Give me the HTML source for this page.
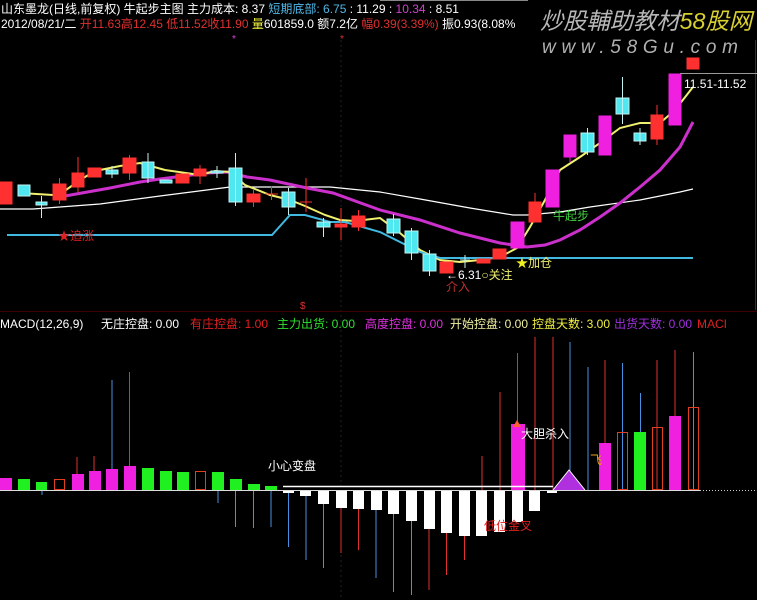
<!DOCTYPE html>
<html><head><meta charset="utf-8"><style>
html,body{margin:0;padding:0;background:#000;}
svg{display:block;}
text{font-family:"Liberation Sans","Noto Sans CJK SC",sans-serif;font-size:12px;}
</style></head><body>
<svg width="757" height="600" viewBox="0 0 757 600" xmlns="http://www.w3.org/2000/svg">
<rect width="757" height="600" fill="#000"/>
<!-- watermark -->
<text x="540" y="29" style="font-size:23px;font-style:italic" fill="#b8b8b8" textLength="212" lengthAdjust="spacingAndGlyphs">炒股輔助教材<tspan fill="#d8d030">58股网</tspan></text>
<text x="542" y="53" style="font-size:19px;font-style:italic" fill="#b0b0b0" textLength="196" lengthAdjust="spacing">www.58Gu.com</text>
<line x1="380" y1="0.5" x2="528" y2="0.5" stroke="#888"/>
<!-- header -->
<text x="1" y="13" fill="#fff">山东墨龙(日线,前复权) 牛起步主图  主力成本: 8.37 <tspan fill="#4fb8e8">短期底部: 6.75</tspan> : 11.29 : <tspan fill="#d040d0">10.34</tspan> : 8.51</text>
<text x="1" y="28" fill="#fff">2012/08/21/二 <tspan fill="#e03030">开11.63高12.45 低11.52收11.90</tspan> <tspan fill="#f0f040">量</tspan>601859.0 额7.2亿 <tspan fill="#e03030">幅0.39(3.39%)</tspan> 振0.93(8.08%</text>
<text x="232" y="42" fill="#e040e0" style="font-size:10px">*</text>
<text x="340" y="42" fill="#e03030" style="font-size:10px">*</text>
<!-- vertical divider -->
<line x1="341" y1="40" x2="341" y2="600" stroke="#222" stroke-dasharray="2,3"/>
<line x1="755.5" y1="40" x2="755.5" y2="310" stroke="#a00000"/>
<!-- separator -->
<line x1="0" y1="311.5" x2="757" y2="311.5" stroke="#400000"/>
<text x="300" y="309" fill="#e03030" style="font-size:10px">$</text>

<!-- MA lines -->
<polyline fill="none" stroke="#fff" stroke-width="1.2" points="0,209 33,209 100,204 160,196 230,187 330,187 380,192 420,199 470,208 513,215 527,215 560,212 590,207 640,200 680,192 693,189"/>
<polyline fill="none" stroke="#cc30cc" stroke-width="3" points="65,196 110,188 140,182 160,179 207,173 227,172 247,177 270,180 307,188 333,193 380,210 420,220 460,233 500,243 527,247 545,245 560,240 580,230 600,217 620,203 640,187 660,170 680,147 693,122"/>
<polyline fill="none" stroke="#f0f070" stroke-width="2" points="20,193 53,195 66,190 80,180 95,171 120,166 140,163 165,170 200,175 215,171 230,172 245,185 270,195 290,200 305,206 325,215 340,220 355,221 380,218 400,233 420,250 440,260 460,262 480,260 500,257 517,248 530,227 545,200 560,170 580,157 600,143 620,128 640,123 660,123 675,110 693,87"/>
<!-- cyan support -->
<polyline fill="none" stroke="#40b8e0" stroke-width="2" points="7,235 272,235 290,215 305,215 330,222 345,222 380,232 420,252 440,258 693,258"/>

<!-- candles: red -->
<g fill="#ff3030" stroke="#ff3030">
<rect x="0" y="182" width="12" height="22"/>
<rect x="53" y="184" width="13" height="16"/><line x1="59.5" y1="178" x2="59.5" y2="204"/>
<rect x="72" y="173" width="12" height="14"/><line x1="78" y1="157" x2="78" y2="192"/>
<rect x="88" y="168" width="13" height="9"/>
<rect x="123" y="158" width="13" height="15"/><line x1="129.5" y1="155" x2="129.5" y2="180"/>
<rect x="176" y="174" width="13" height="9"/>
<rect x="194" y="169" width="12" height="7"/><line x1="200" y1="165" x2="200" y2="184"/>
<rect x="247" y="194" width="13" height="8"/><line x1="253.5" y1="190" x2="253.5" y2="207"/>
<line x1="265" y1="194" x2="278" y2="194"/><line x1="271.5" y1="186" x2="271.5" y2="200"/>
<line x1="300" y1="202" x2="312" y2="202"/><line x1="306" y1="178" x2="306" y2="212"/>
<rect x="335" y="224" width="12" height="3"/><line x1="341" y1="208" x2="341" y2="240"/>
<rect x="352" y="216" width="13" height="11"/><line x1="358.5" y1="210" x2="358.5" y2="231"/>
<rect x="440" y="262" width="13" height="11"/>
<rect x="477" y="259" width="13" height="4"/>
<rect x="493" y="249" width="13" height="10"/>
<rect x="529" y="202" width="12" height="20"/><line x1="535" y1="193" x2="535" y2="222"/>
<rect x="651" y="115" width="12" height="24"/><line x1="657" y1="105" x2="657" y2="145"/>
<rect x="687" y="58" width="12" height="11"/>
</g>
<!-- candles: cyan -->
<g fill="#50e8f0" stroke="#c0f0f0">
<rect x="18" y="185" width="12" height="11"/>
<rect x="36" y="202" width="11" height="3"/><line x1="41.5" y1="196" x2="41.5" y2="218"/>
<rect x="106" y="170" width="12" height="4"/><line x1="112" y1="166" x2="112" y2="178"/>
<rect x="142" y="162" width="12" height="16"/><line x1="148" y1="153" x2="148" y2="183"/>
<rect x="160" y="180" width="12" height="3"/>
<rect x="211" y="171" width="12" height="2"/><line x1="217" y1="166" x2="217" y2="178"/>
<rect x="229" y="168" width="13" height="34"/><line x1="235.5" y1="153" x2="235.5" y2="206"/>
<rect x="282" y="192" width="13" height="15"/><line x1="288.5" y1="188" x2="288.5" y2="215"/>
<rect x="317" y="222" width="13" height="5"/><line x1="323.5" y1="218" x2="323.5" y2="237"/>
<rect x="387" y="219" width="13" height="14"/><line x1="393.5" y1="214" x2="393.5" y2="236"/>
<rect x="405" y="231" width="13" height="22"/><line x1="411.5" y1="228" x2="411.5" y2="260"/>
<rect x="423" y="254" width="13" height="17"/><line x1="429.5" y1="250" x2="429.5" y2="276"/>
<line x1="460" y1="260" x2="470" y2="260"/><line x1="465" y1="255" x2="465" y2="268"/>
<rect x="581" y="133" width="13" height="19"/><line x1="587.5" y1="128" x2="587.5" y2="155"/>
<rect x="616" y="98" width="13" height="16"/><line x1="622.5" y1="77" x2="622.5" y2="124"/>
<rect x="634" y="133" width="12" height="8"/><line x1="640" y1="128" x2="640" y2="145"/>
</g>
<!-- candles: magenta -->
<g fill="#f020e0" stroke="#f020e0">
<rect x="511" y="222" width="13" height="26"/>
<rect x="546" y="170" width="13" height="37"/>
<rect x="564" y="135" width="12" height="22"/><line x1="570" y1="157" x2="570" y2="162"/>
<rect x="599" y="116" width="12" height="39"/>
<rect x="669" y="74" width="12" height="51"/>
</g>
<line x1="680" y1="73.5" x2="757" y2="73.5" stroke="#999"/>
<text x="684" y="88" fill="#fff">11.51-11.52</text>
<text x="58" y="240" fill="#e02020">★追涨</text>
<text x="446" y="279" fill="#fff">←6.31<tspan fill="#f0f070">○关注</tspan></text>
<text x="446" y="291" fill="#c03030">介入</text>
<text x="516" y="267" fill="#f0f020">★<tspan fill="#f0f070">加仓</tspan></text>
<text x="553" y="220" fill="#40d040">牛起步</text>

<!-- MACD header -->
<text x="0" y="328" fill="#fff">MACD(12,26,9)</text>
<text x="101" y="328" fill="#fff">无庄控盘: 0.00</text>
<text x="190" y="328" fill="#e02020">有庄控盘: 1.00</text>
<text x="277" y="328" fill="#30e030">主力出货: 0.00</text>
<text x="365" y="328" fill="#e030e0">高度控盘: 0.00</text>
<text x="450" y="328" fill="#f0f0a0">开始控盘: 0.00</text>
<text x="532" y="328" fill="#f0f040">控盘天数: 3.00</text>
<text x="614" y="328" fill="#a030e0">出货天数: 0.00</text>
<text x="697" y="328" fill="#e02020">MACI</text>

<!-- stems -->
<g stroke="#e03030" stroke-width="1">
<line x1="77" y1="457" x2="77" y2="474"/><line x1="94" y1="456" x2="94" y2="471"/><line x1="129.5" y1="372" x2="129.5" y2="466"/>
<line x1="341" y1="490" x2="341" y2="553"/><line x1="358.5" y1="490" x2="358.5" y2="550"/>
<line x1="429" y1="490" x2="429" y2="590"/><line x1="446.5" y1="490" x2="446.5" y2="575"/><line x1="464.5" y1="490" x2="464.5" y2="560"/>
<line x1="482" y1="456" x2="482" y2="490"/><line x1="500" y1="392" x2="500" y2="490"/><line x1="517.5" y1="353" x2="517.5" y2="424"/>
<line x1="535" y1="337" x2="535" y2="490"/><line x1="553" y1="337" x2="553" y2="490"/><line x1="605" y1="360" x2="605" y2="490"/>
<line x1="657" y1="360" x2="657" y2="490"/><line x1="675" y1="350" x2="675" y2="490"/>
</g>
<g stroke="#4a90e0" stroke-width="1">
<line x1="112" y1="380" x2="112" y2="469"/><line x1="42" y1="490" x2="42" y2="495"/>
<line x1="218" y1="490" x2="218" y2="503"/><line x1="235.5" y1="490" x2="235.5" y2="527"/><line x1="253.5" y1="490" x2="253.5" y2="528"/><line x1="271" y1="490" x2="271" y2="527"/>
<line x1="288.5" y1="490" x2="288.5" y2="547"/><line x1="306" y1="490" x2="306" y2="560"/><line x1="323.5" y1="490" x2="323.5" y2="568"/>
<line x1="376" y1="490" x2="376" y2="578"/><line x1="393.5" y1="490" x2="393.5" y2="592"/><line x1="411.5" y1="490" x2="411.5" y2="595"/>
<line x1="570" y1="342" x2="570" y2="490"/><line x1="588" y1="367" x2="588" y2="490"/><line x1="622.5" y1="363" x2="622.5" y2="490"/><line x1="640.5" y1="393" x2="640.5" y2="490"/><line x1="693.5" y1="352" x2="693.5" y2="490"/>
</g>
<!-- positive bars -->
<g fill="#f020e0"><rect x="0" y="478" width="12" height="12"/><rect x="72" y="474" width="12" height="16"/><rect x="89" y="471" width="12" height="19"/><rect x="106" y="469" width="12" height="21"/><rect x="124" y="466" width="12" height="24"/><rect x="511" y="424" width="14" height="66"/><rect x="599" y="443" width="12" height="47"/><rect x="669" y="416" width="12" height="74"/></g>
<g fill="#20f020"><rect x="18" y="479" width="12" height="11"/><rect x="36" y="482" width="11" height="8"/><rect x="142" y="468" width="12" height="22"/><rect x="160" y="471" width="12" height="19"/><rect x="177" y="472" width="12" height="18"/><rect x="212" y="472" width="12" height="18"/><rect x="230" y="479" width="12" height="11"/><rect x="248" y="484" width="12" height="6"/><rect x="265" y="486" width="12" height="4"/><rect x="634" y="432" width="12" height="58"/></g>
<g fill="none" stroke="#e04020"><rect x="54.5" y="479.5" width="10" height="10"/><rect x="195.5" y="471.5" width="10" height="18"/><rect x="617.5" y="432.5" width="10" height="57"/><rect x="652.5" y="427.5" width="10" height="62"/><rect x="688.5" y="407.5" width="10" height="82"/></g>
<path d="M553,490 L569,470 L585,490" fill="#b030e0" stroke="#fff" stroke-width="1"/>
<!-- negative bars -->
<g fill="#fff"><rect x="283" y="490" width="11" height="3"/><rect x="300" y="490" width="11" height="6"/><rect x="318" y="490" width="11" height="14"/><rect x="336" y="490" width="11" height="18"/><rect x="353" y="490" width="11" height="19"/><rect x="371" y="490" width="11" height="20"/><rect x="388" y="490" width="11" height="24"/><rect x="406" y="490" width="11" height="31"/><rect x="424" y="490" width="11" height="39"/><rect x="441" y="490" width="11" height="43"/><rect x="459" y="490" width="11" height="46"/><rect x="476" y="490" width="11" height="46"/><rect x="494" y="490" width="11" height="42"/><rect x="512" y="490" width="11" height="32"/><rect x="529" y="490" width="11" height="21"/><rect x="547" y="490" width="10" height="3"/></g>
<line x1="283" y1="486.5" x2="553" y2="486.5" stroke="#fff" stroke-width="1.5"/>
<line x1="0" y1="490.5" x2="700" y2="490.5" stroke="#ddd"/>
<line x1="700" y1="490.5" x2="757" y2="490.5" stroke="#ccc" stroke-dasharray="1,2"/>
<path d="M513,427 L517,420 L521,427Z" fill="#ff6030"/>
<text x="268" y="470" fill="#fff">小心变盘</text>
<text x="521" y="438" fill="#fff">大胆杀入</text>
<text x="590" y="464" fill="#f0a020">飞</text>
<text x="484" y="530" fill="#e02020">低位金叉</text>
</svg>
</body></html>
